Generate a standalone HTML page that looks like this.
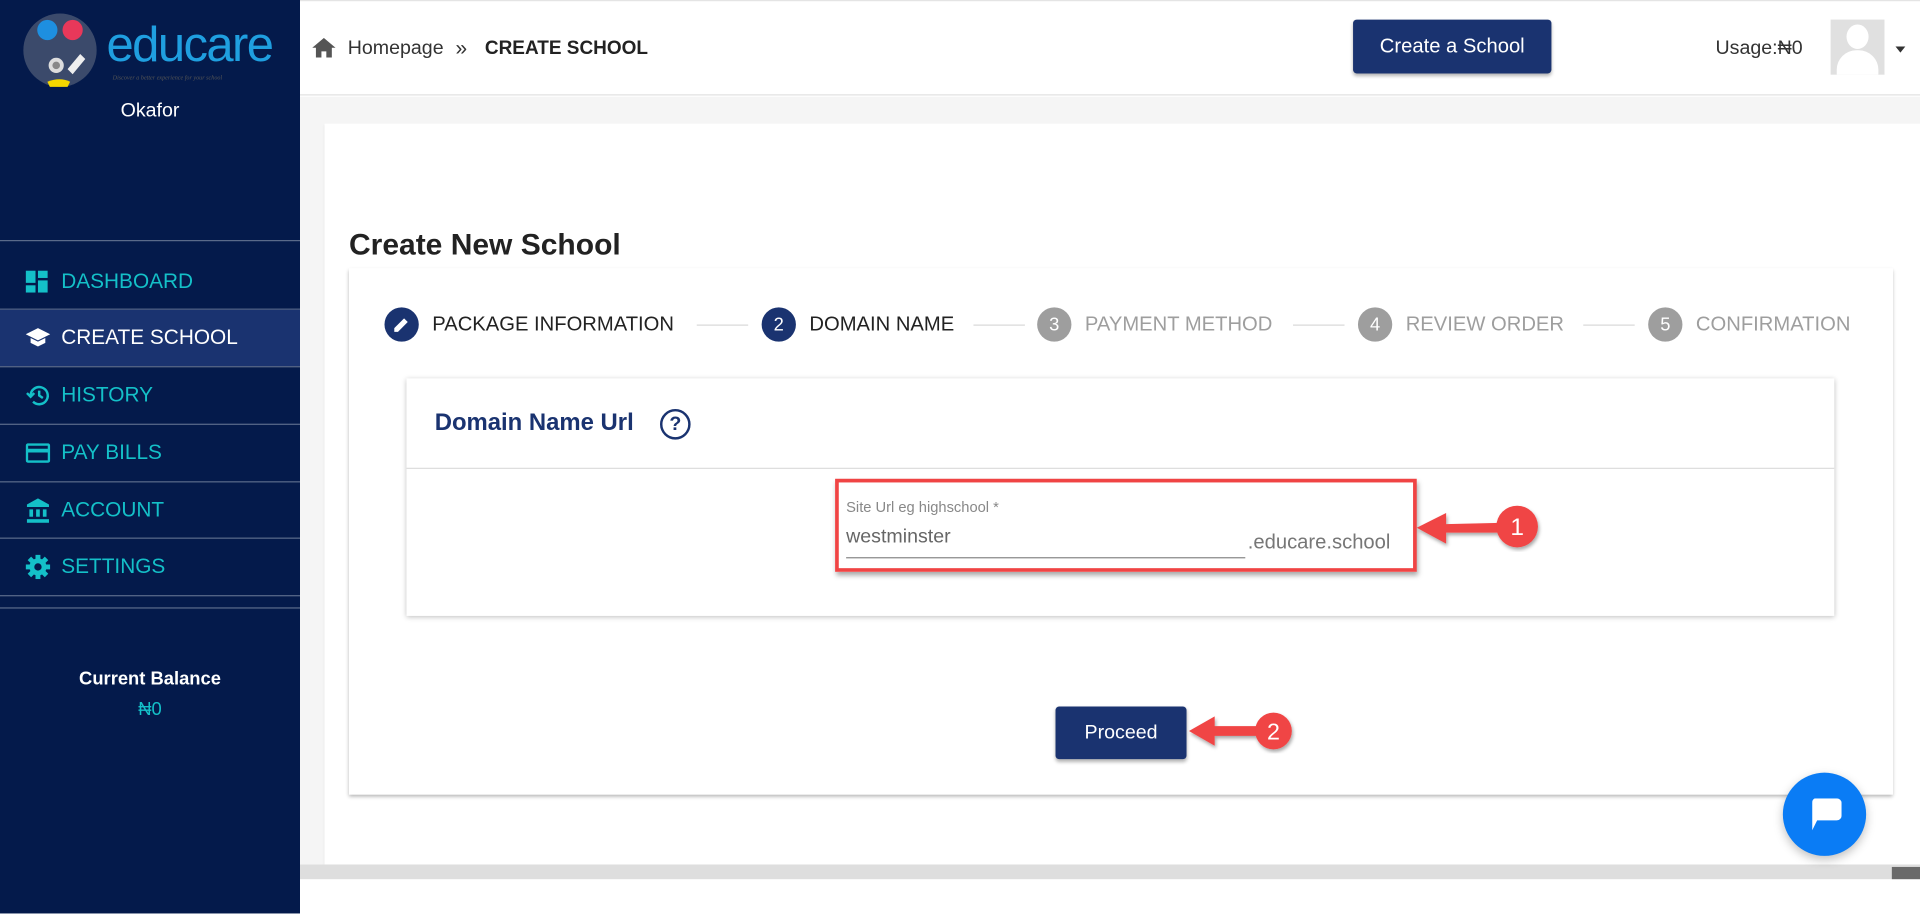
<!DOCTYPE html>
<html><head><meta charset="utf-8"><style>
*{box-sizing:border-box;margin:0;padding:0}
html,body{width:1920px;height:914px;overflow:hidden;background:#fff;font-family:"Liberation Sans",Arial,sans-serif}
#w{position:absolute;left:0;top:0;width:1568px;height:746px;transform:scale(1.22449);transform-origin:0 0;background:#fff}
.a{position:absolute}
#sb{left:0;top:0;width:245px;height:746px;background:#041a4b}
.mi{position:absolute;left:0;width:245px;height:46px;color:#14c0c8;font-size:17px;display:flex;align-items:center;padding-left:50px}
.mi svg{position:absolute;left:21px}
.ln{position:absolute;left:0;width:245px;height:1px;background:#5a6a8a}
.step{position:absolute;top:251px;display:flex;align-items:center;font-size:16.5px;color:#222}
.c{width:28px;height:28px;border-radius:50%;background:#1a3370;color:#fff;font-size:15px;display:flex;align-items:center;justify-content:center;margin-right:11px}
.g .c{background:#9e9e9e}.g{color:#9e9e9e}
.sl{position:absolute;top:265px;height:1px;background:#d8d8d8}
</style></head><body><div id="w">
<div id="sb" class="a">
 <svg class="a" style="left:18px;top:9px" width="62" height="64" viewBox="0 0 60 62">
  <circle cx="30" cy="31" r="29" fill="#3b4a6b"/>
  <circle cx="20" cy="15" r="8" fill="#1e8fe0"/><circle cx="40" cy="15" r="8" fill="#e8385a"/>
  <circle cx="27" cy="43" r="6" fill="#ddd"/><circle cx="27" cy="43" r="3" fill="#888"/>
  <path d="M36 46 L46 34 L50 38 L40 50Z" fill="#eee"/>
  <path d="M20 56 Q30 52 38 56 L36 60 L22 60Z" fill="#f5d800"/>
 </svg>
 <div class="a" style="left:87px;top:15px;font-size:40px;color:#1f9fe0;letter-spacing:-1.3px">educare</div>
 <div class="a" style="left:92px;top:62px;font-size:5px;color:#555;font-style:italic;font-family:'Liberation Serif',serif">Discover a better experience for your school</div>
 <div class="a" style="left:0;width:245px;top:82px;text-align:center;color:#fff;font-size:16px">Okafor</div>
 <div class="ln" style="top:196px"></div>
 <div class="mi" style="top:207px"><svg width="18" height="18" viewBox="0 0 18 18" fill="#14c0c8"><rect x="0" y="0" width="8" height="10"/><rect x="10" y="0" width="8" height="6"/><rect x="0" y="12" width="8" height="6"/><rect x="10" y="8" width="8" height="10"/></svg>DASHBOARD</div>
 <div class="ln" style="top:252px"></div>
 <div class="mi" style="top:253px;background:#1a3370;color:#fff"><svg width="20" height="18" viewBox="0 0 20 18" fill="#fff"><path d="M10 1 L20 6 L10 11 L0 6Z"/><path d="M4 9 L4 13 L10 16 L16 13 L16 9 L10 12Z"/></svg>CREATE SCHOOL</div>
 <div class="ln" style="top:299px"></div>
 <div class="mi" style="top:300px"><svg width="20" height="18" viewBox="0 0 20 18" fill="none" stroke="#14c0c8" stroke-width="2"><path d="M4 9 A7 7 0 1 1 6 14"/><path d="M1 7 L4 10 L7 7"/><path d="M11 5 V9 L14 11"/></svg>HISTORY</div>
 <div class="ln" style="top:346px"></div>
 <div class="mi" style="top:347px"><svg width="20" height="16" viewBox="0 0 20 16" fill="none" stroke="#14c0c8" stroke-width="2"><rect x="1" y="1" width="18" height="14" rx="1"/><path d="M1 6 H19" stroke-width="3"/></svg>PAY BILLS</div>
 <div class="ln" style="top:393px"></div>
 <div class="mi" style="top:394px"><svg width="20" height="20" viewBox="0 0 20 20" fill="#14c0c8"><path d="M10 0 L19 5 L19 7 L1 7 L1 5Z"/><rect x="3" y="9" width="3" height="6"/><rect x="8.5" y="9" width="3" height="6"/><rect x="14" y="9" width="3" height="6"/><rect x="1" y="17" width="18" height="3"/></svg>ACCOUNT</div>
 <div class="ln" style="top:439px"></div>
 <div class="mi" style="top:440px"><svg width="20" height="20" viewBox="0 0 20 20"><circle cx="10" cy="10" r="7" fill="#14c0c8"/><g stroke="#14c0c8" stroke-width="4"><path d="M10 0V20M0 10H20M3 3L17 17M17 3L3 17"/></g><circle cx="10" cy="10" r="3" fill="#041a4b"/></svg>SETTINGS</div>
 <div class="ln" style="top:486px"></div>
 <div class="ln" style="top:496px"></div>
 <div class="a" style="left:0;width:245px;top:546px;text-align:center;color:#fff;font-size:15px;font-weight:bold">Current Balance</div>
 <div class="a" style="left:0;width:245px;top:571px;text-align:center;color:#14c0c8;font-size:15px">₦0</div>
</div>
<div class="a" style="left:245px;top:0;width:1323px;height:78px;background:#fff;border-bottom:1px solid #e0e0e0;border-top:1px solid #e4e4e4"></div>
<svg class="a" style="left:255px;top:31px" width="19" height="16" viewBox="0 0 19 16" fill="#555"><path d="M9.5 0 L19 8 L16 8 L16 16 L11.5 16 L11.5 11 L7.5 11 L7.5 16 L3 16 L3 8 L0 8Z"/></svg>
<div class="a" style="left:284px;top:31px;font-size:16px;color:#333">Homepage</div>
<div class="a" style="left:372px;top:30px;font-size:17px;color:#333">»</div>
<div class="a" style="left:396px;top:31px;font-size:15.5px;color:#222;font-weight:bold">CREATE SCHOOL</div>
<div class="a" style="left:1105px;top:16px;width:162px;height:44px;background:#1a3370;border-radius:3px;color:#fff;font-size:16.5px;display:flex;align-items:center;justify-content:center;box-shadow:0 2px 3px rgba(0,0,0,.3)">Create a School</div>
<div class="a" style="left:1401px;top:31px;font-size:16px;color:#333">Usage:₦0</div>
<div class="a" style="left:1495px;top:16px;width:44px;height:45px;background:#e0e0e0;overflow:hidden"><div class="a" style="left:13px;top:4px;width:18px;height:20px;border-radius:50%;background:#fff"></div><div class="a" style="left:5px;top:25px;width:34px;height:30px;border-radius:16px 16px 0 0;background:#fff"></div></div>
<div class="a" style="left:1548px;top:38px;border-left:4px solid transparent;border-right:4px solid transparent;border-top:5px solid #333"></div>
<div class="a" style="left:245px;top:79px;width:1323px;height:627px;background:#f5f5f5"></div>
<div class="a" style="left:265px;top:101px;width:1303px;height:605px;background:#fff;box-shadow:0 1px 2px rgba(0,0,0,.1)"></div>
<div class="a" style="left:245px;top:706px;width:1323px;height:12px;background:#dedede"></div>
<div class="a" style="left:1545px;top:708px;width:23px;height:10px;background:#6a6a6a"></div>
<div class="a" style="left:285px;top:187px;font-size:24.5px;font-weight:bold;color:#222">Create New School</div>
<div class="a" style="left:285px;top:219px;width:1261px;height:430px;background:#fff;box-shadow:0 2px 3px rgba(0,0,0,.3)"></div>
<div class="step" style="left:314px"><div class="c"><svg width="14" height="14" viewBox="0 0 14 14" fill="#fff"><path d="M1 10 L9 2 L12 5 L4 13 L1 13Z"/></svg></div>PACKAGE INFORMATION</div>
<div class="sl" style="left:569px;width:42px"></div>
<div class="step" style="left:622px"><div class="c">2</div>DOMAIN NAME</div>
<div class="sl" style="left:795px;width:42px"></div>
<div class="step g" style="left:847px"><div class="c">3</div>PAYMENT METHOD</div>
<div class="sl" style="left:1056px;width:42px"></div>
<div class="step g" style="left:1109px"><div class="c">4</div>REVIEW ORDER</div>
<div class="sl" style="left:1293px;width:42px"></div>
<div class="step g" style="left:1346px"><div class="c">5</div>CONFIRMATION</div>
<div class="a" style="left:332px;top:309px;width:1166px;height:194px;background:#fff;box-shadow:0 1px 4px rgba(0,0,0,.25)"></div>
<div class="a" style="left:355px;top:334px;font-size:19.5px;font-weight:bold;color:#1a3370">Domain Name Url</div>
<div class="a" style="left:539px;top:334px;width:25px;height:25px;border:2px solid #1a3370;border-radius:50%;color:#1a3370;font-size:16px;font-weight:bold;text-align:center;line-height:21px">?</div>
<div class="a" style="left:332px;top:382px;width:1166px;height:1px;background:#ddd"></div>
<div class="a" style="left:682px;top:391px;width:475px;height:76px;border:3px solid #f04444;box-shadow:1px 3px 4px rgba(0,0,0,.35)"></div>
<div class="a" style="left:691px;top:407px;font-size:12px;color:#888">Site Url eg highschool *</div>
<div class="a" style="left:691px;top:430px;font-size:16px;color:#666">westminster</div>
<div class="a" style="left:691px;top:455px;width:326px;height:1px;background:#888"></div>
<div class="a" style="left:1019px;top:434px;font-size:16.5px;color:#777">.educare.school</div>
<svg class="a" style="left:1155px;top:410px" width="110" height="44" viewBox="0 0 110 44"><defs><filter id="s"><feDropShadow dx="1" dy="2" stdDeviation="1.5" flood-opacity=".35"/></filter></defs><g filter="url(#s)"><path d="M2 21 L26 9 L26 18 L70 17 L70 25 L26 25 L26 34Z" fill="#f04444"/><circle cx="84" cy="20" r="17" fill="#f04444"/></g><text x="84" y="27" font-size="20" fill="#fff" text-anchor="middle" font-family="Liberation Sans">1</text></svg>
<div class="a" style="left:862px;top:577px;width:107px;height:43px;background:#1a3370;border-radius:3px;color:#fff;font-size:16px;display:flex;align-items:center;justify-content:center;box-shadow:0 2px 3px rgba(0,0,0,.3)">Proceed</div>
<svg class="a" style="left:968px;top:576px" width="100" height="44" viewBox="0 0 100 44"><g filter="url(#s)"><path d="M3 21 L24 9 L24 17 L60 17 L60 25 L24 25 L24 33Z" fill="#f04444"/><circle cx="72" cy="21" r="15" fill="#f04444"/></g><text x="72" y="28" font-size="19" fill="#fff" text-anchor="middle" font-family="Liberation Sans">2</text></svg>
<div class="a" style="left:1456px;top:631px;width:68px;height:68px;border-radius:50%;background:#0a7cf5;box-shadow:0 3px 8px rgba(0,0,0,.25)"><svg class="a" style="left:22px;top:21px" width="26" height="28" viewBox="0 0 26 28"><path d="M4 0 H22 A4 4 0 0 1 26 4 V14 A4 4 0 0 1 22 18 H6 L2 26 V4 A4 4 0 0 1 4 0Z" fill="#fff"/></svg></div>
</div></body></html>
